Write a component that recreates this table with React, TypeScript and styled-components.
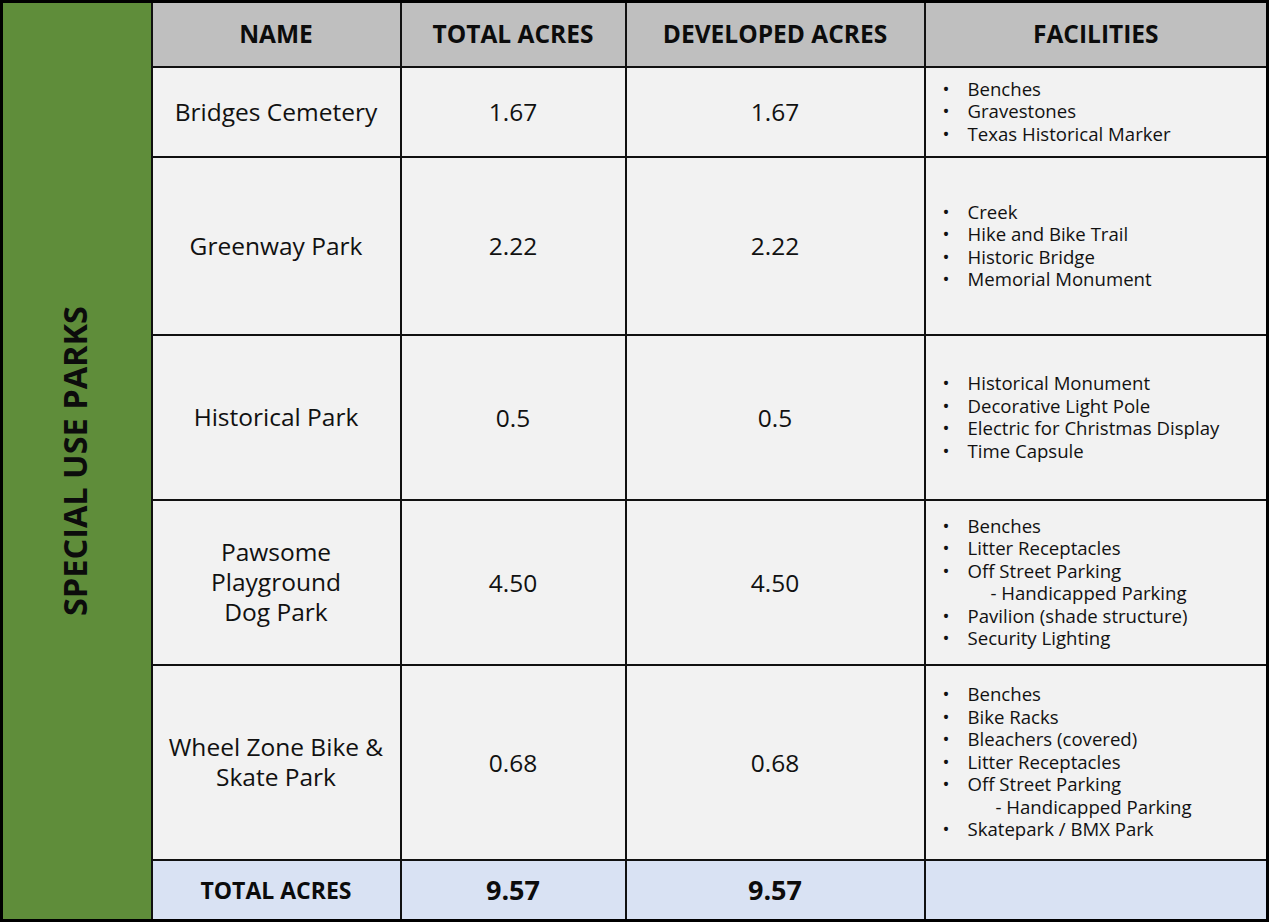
import * as React from "react";
import styled, { createGlobalStyle } from "styled-components";

interface Facility {
  text: string;
  sub?: boolean;
}

interface Park {
  name: string[];
  total: string;
  developed: string;
  height: number;
  subIndent: number;
  facilities: Facility[];
}

const parks: Park[] = [
  {
    name: ["Bridges Cemetery"],
    total: "1.67",
    developed: "1.67",
    height: 90,
    subIndent: 23,
    facilities: [
      { text: "Benches" },
      { text: "Gravestones" },
      { text: "Texas Historical Marker" },
    ],
  },
  {
    name: ["Greenway Park"],
    total: "2.22",
    developed: "2.22",
    height: 178,
    subIndent: 23,
    facilities: [
      { text: "Creek" },
      { text: "Hike and Bike Trail" },
      { text: "Historic Bridge" },
      { text: "Memorial Monument" },
    ],
  },
  {
    name: ["Historical Park"],
    total: "0.5",
    developed: "0.5",
    height: 165,
    subIndent: 23,
    facilities: [
      { text: "Historical Monument" },
      { text: "Decorative Light Pole" },
      { text: "Electric for Christmas Display" },
      { text: "Time Capsule" },
    ],
  },
  {
    name: ["Pawsome", "Playground", "Dog Park"],
    total: "4.50",
    developed: "4.50",
    height: 165,
    subIndent: 23,
    facilities: [
      { text: "Benches" },
      { text: "Litter Receptacles" },
      { text: "Off Street Parking" },
      { text: "- Handicapped Parking", sub: true },
      { text: "Pavilion (shade structure)" },
      { text: "Security Lighting" },
    ],
  },
  {
    name: ["Wheel Zone Bike &", "Skate Park"],
    total: "0.68",
    developed: "0.68",
    height: 195,
    subIndent: 28,
    facilities: [
      { text: "Benches" },
      { text: "Bike Racks" },
      { text: "Bleachers (covered)" },
      { text: "Litter Receptacles" },
      { text: "Off Street Parking" },
      { text: "- Handicapped Parking", sub: true },
      { text: "Skatepark / BMX Park" },
    ],
  },
];

export default function App() {
  return (
    <>
      <GlobalStyle />
      <Table>
        <colgroup>
          <col style={{ width: 150 }} />
          <col style={{ width: 249 }} />
          <col style={{ width: 225 }} />
          <col style={{ width: 299 }} />
          <col style={{ width: 343 }} />
        </colgroup>
        <tbody>
          <tr style={{ height: 65 }}>
            <SideCell rowSpan={7}>
              <SideLabel>SPECIAL USE PARKS</SideLabel>
            </SideCell>
            <HeaderCell>NAME</HeaderCell>
            <HeaderCell>TOTAL ACRES</HeaderCell>
            <HeaderCell>DEVELOPED ACRES</HeaderCell>
            <HeaderCell>FACILITIES</HeaderCell>
          </tr>
          {parks.map((park) => (
            <tr key={park.name.join(" ")} style={{ height: park.height }}>
              <NameCell>
                {park.name.map((line) => (
                  <NameLine key={line}>{line}</NameLine>
                ))}
              </NameCell>
              <NumCell>{park.total}</NumCell>
              <NumCell>{park.developed}</NumCell>
              <FacilityCell>
                <FacilityList>
                  {park.facilities.map((f, i) =>
                    f.sub ? (
                      <SubItem key={i} $indent={park.subIndent}>{f.text}</SubItem>
                    ) : (
                      <Item key={i}>{f.text}</Item>
                    )
                  )}
                </FacilityList>
              </FacilityCell>
            </tr>
          ))}
          <tr style={{ height: 61 }}>
            <TotalCell>TOTAL ACRES</TotalCell>
            <TotalNum>9.57</TotalNum>
            <TotalNum>9.57</TotalNum>
            <TotalCell />
          </tr>
        </tbody>
      </Table>
    </>
  );
}

const GlobalStyle = createGlobalStyle`
  body {
    margin: 0;
    background: #ffffff;
    font-family: "Open Sans", "Liberation Sans", sans-serif;
    color: #111;
  }
`;

const Table = styled("table")`
  width: 1268px;
  table-layout: fixed;
  border-collapse: collapse;
  border: 3px solid #000;
`;

const Cell = styled("td")`
  border: 2px solid #111;
  padding: 0;
  text-align: center;
  vertical-align: middle;
`;

const SideCell = styled(Cell)`
  background: #5f8d3a;
`;

const SideLabel = styled("div")`
  writing-mode: vertical-rl;
  transform: rotate(180deg);
  margin: 0 auto 0 49px;
  font-size: 32.5px;
  font-weight: 700;
  color: #0c0c0c;
`;

const HeaderCell = styled(Cell)`
  background: #bfbfbf;
  font-size: 24.5px;
  font-weight: 700;
  color: #0c0c0c;
  padding-bottom: 2px;
`;

const NameCell = styled(Cell)`
  background: #f2f2f2;
  font-size: 24.5px;
  line-height: 30px;
`;

const NameLine = styled("div")``;

const NumCell = styled(Cell)`
  background: #f2f2f2;
  font-size: 24.5px;
`;

const FacilityCell = styled(Cell)`
  background: #f2f2f2;
  text-align: left;
  padding-left: 17px;
`;

const FacilityList = styled("ul")`
  list-style: none;
  margin: 0;
  padding: 0;
  font-size: 18.6px;
  line-height: 22.5px;
`;

const Item = styled("li")`
  position: relative;
  padding-left: 25px;
  &::before {
    content: "•";
    position: absolute;
    left: 0;
    top: 0;
  }
`;

const SubItem = styled("li")<{ $indent: number }>`
  padding-left: ${(p) => 25 + p.$indent}px;
`;

const TotalCell = styled(Cell)`
  background: #d9e2f3;
  font-size: 23px;
  font-weight: 700;
  color: #0c0c0c;
`;

const TotalNum = styled(TotalCell)`
  font-size: 27px;
`;
